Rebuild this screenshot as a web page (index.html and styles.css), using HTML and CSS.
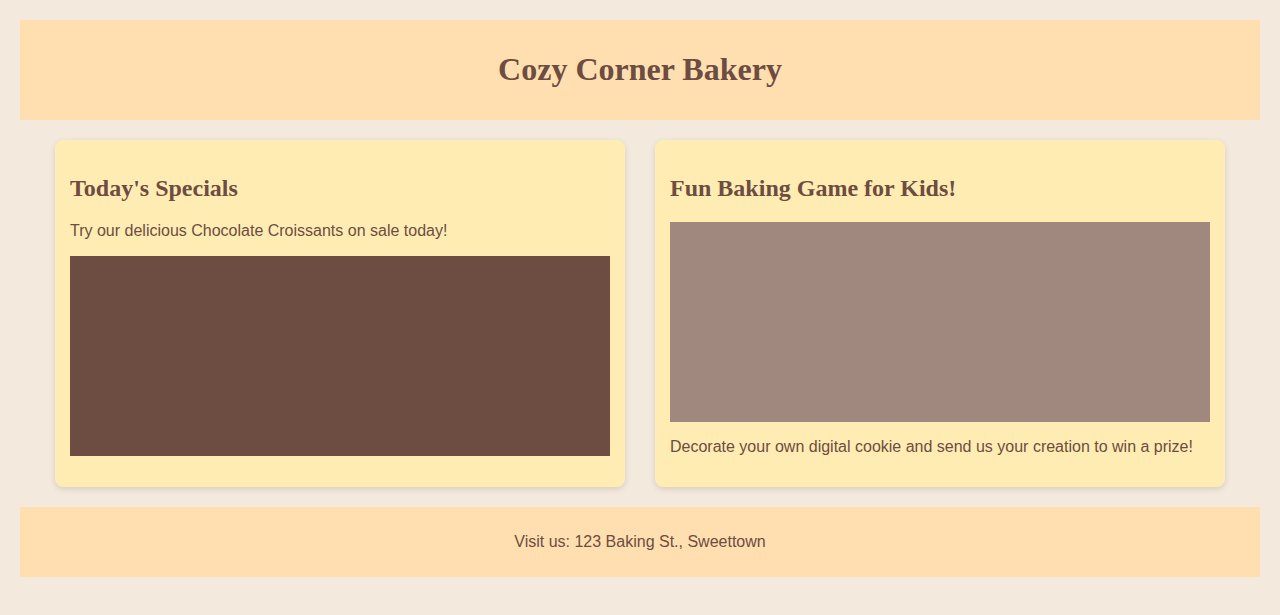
FILE: index.html
```html
<!DOCTYPE html>
<html lang="en">
<head>
<meta charset="utf-8">
<title>Cozy Corner Bakery</title>
<link rel="stylesheet" href="styles.css">
</head>
<body>
<header class="site-header">
  <h1 class="site-title">Cozy Corner Bakery</h1>
</header>
<main class="cards">
  <section class="card">
    <h2 class="card-title">Today's Specials</h2>
    <p class="card-text">Try our delicious Chocolate Croissants on sale today!</p>
    <div class="media media-dark"></div>
  </section>
  <section class="card">
    <h2 class="card-title">Fun Baking Game for Kids!</h2>
    <div class="media media-light"></div>
    <p class="card-text">Decorate your own digital cookie and send us your creation to win a prize!</p>
  </section>
</main>
<footer class="site-footer">
  <p class="footer-text">Visit us: 123 Baking St., Sweettown</p>
</footer>
</body>
</html>
```
FILE: styles.css
```css
html, body {
  margin: 0;
}
body {
  padding: 20px;
  background: #f3e9dd;
  color: #6d4c41;
  font-family: "Liberation Sans", Arial, sans-serif;
  font-size: 16px;
}
.site-header {
  background: #ffdfb0;
  padding: 10px;
  text-align: center;
}
.site-title {
  font-family: "Liberation Serif", "Times New Roman", serif;
  font-size: 32px;
  font-weight: bold;
  margin: 21.44px 0;
}
.cards {
  display: flex;
  justify-content: center;
  margin: 20px 0;
}
.card {
  width: 540px;
  padding: 15px;
  margin: 0 15px;
  background: #ffecb3;
  border-radius: 8px;
  box-shadow: 0 2px 6px rgba(0, 0, 0, 0.12);
}
.card-title {
  font-family: "Liberation Serif", "Times New Roman", serif;
  font-size: 24px;
  font-weight: bold;
  margin: 19.92px 0;
}
.card-text {
  margin: 16px 0;
}
.media {
  width: 100%;
  height: 200px;
}
.media-dark {
  background: #6d4c41;
}
.media-light {
  background: #a1887f;
}
.site-footer {
  background: #ffdfb0;
  padding: 10px;
  text-align: center;
}
.footer-text {
  margin: 16px 0;
}
```
